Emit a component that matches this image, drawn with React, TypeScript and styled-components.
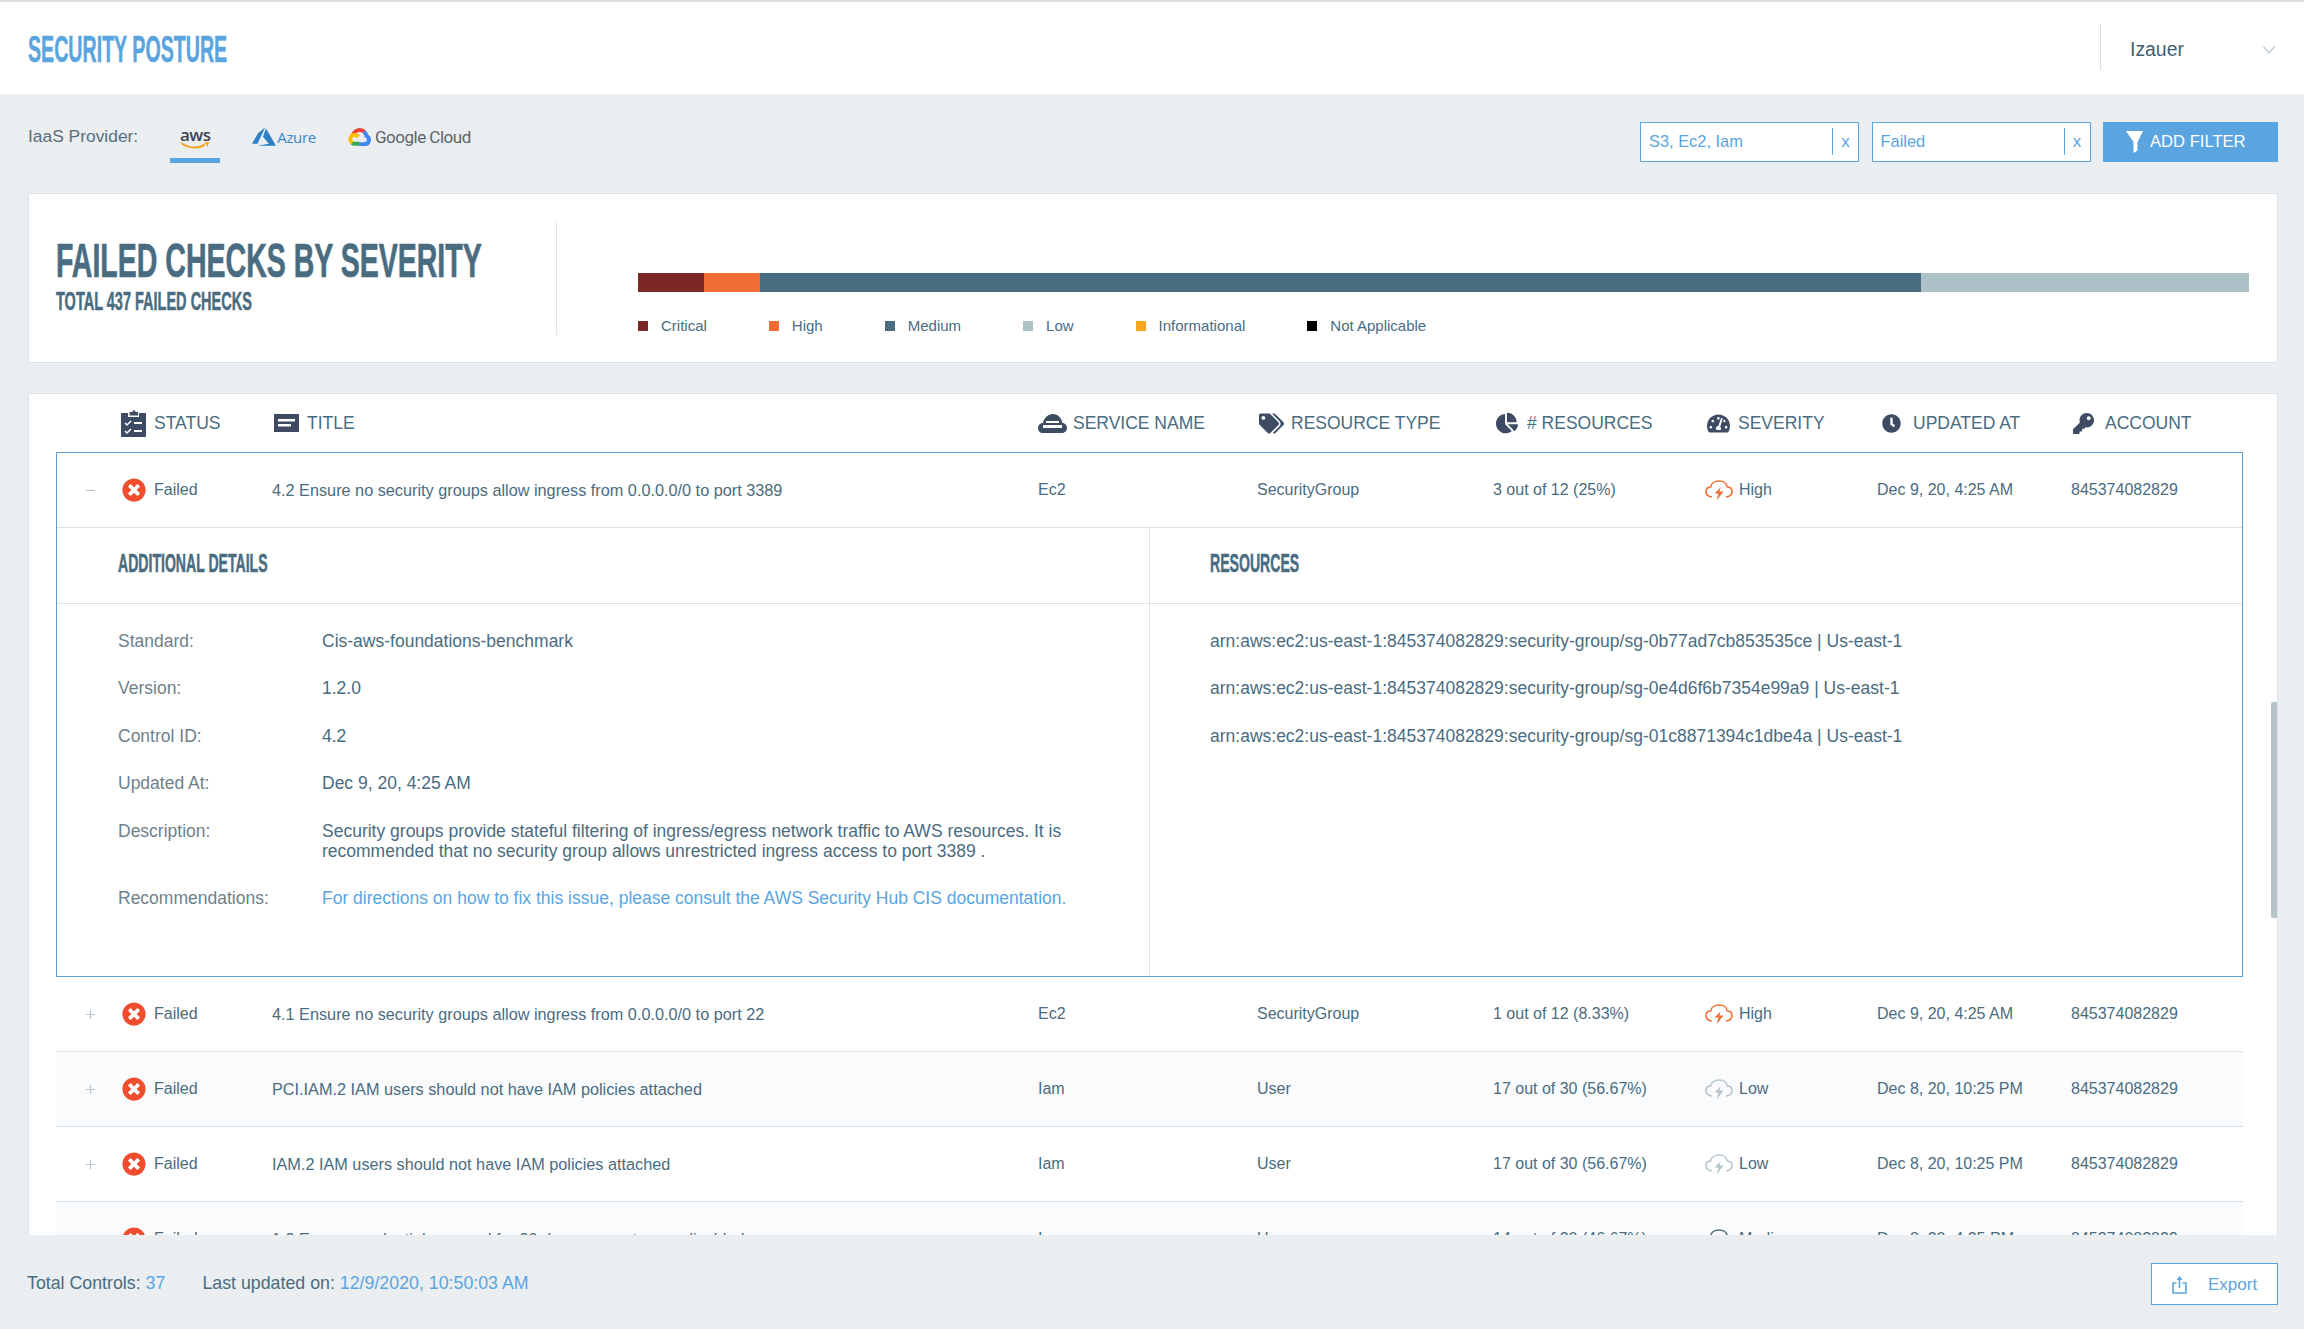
import { FunctionComponent } from "react";
import styled, { createGlobalStyle } from "styled-components";
import { FaChartPie, FaClock, FaKey, FaTachometerAlt, FaTags, FaTimesCircle } from "react-icons/fa";

const GlobalStyle = createGlobalStyle`
  html, body {
    margin: 0;
    padding: 0;
    background: #ebeef1;
  }
  #root {
    height: 1329px;
    overflow: hidden;
    font-family: "Liberation Sans", Arial, sans-serif;
    color: #4a6c80;
  }
  * {
    box-sizing: border-box;
  }
`;

const columns = "63px 151px 766px 219px 236px 212px 172px 194px 1fr";

const severityColors: Record<string, string> = {
  High: "#f26d36",
  Medium: "#4a6c80",
  Low: "#b5c5cd",
};

const segments = [
  { name: "Critical", color: "#7b2826", size: 66 },
  { name: "High", color: "#f26d36", size: 56 },
  { name: "Medium", color: "#4a6c80", size: 1161 },
  { name: "Low", color: "#afc1c8", size: 328 },
  { name: "Informational", color: "#f5a623", size: 0 },
  { name: "Not Applicable", color: "#000000", size: 0 },
];

const details = [
  { label: "Standard:", value: "Cis-aws-foundations-benchmark" },
  { label: "Version:", value: "1.2.0" },
  { label: "Control ID:", value: "4.2" },
  { label: "Updated At:", value: "Dec 9, 20, 4:25 AM" },
  {
    label: "Description:",
    value:
      "Security groups provide stateful filtering of ingress/egress network traffic to AWS resources. It is recommended that no security group allows unrestricted ingress access to port 3389 .",
  },
];

const resources = [
  "arn:aws:ec2:us-east-1:845374082829:security-group/sg-0b77ad7cb853535ce | Us-east-1",
  "arn:aws:ec2:us-east-1:845374082829:security-group/sg-0e4d6f6b7354e99a9 | Us-east-1",
  "arn:aws:ec2:us-east-1:845374082829:security-group/sg-01c8871394c1dbe4a | Us-east-1",
];

const expandedCheck = {
  title: "4.2 Ensure no security groups allow ingress from 0.0.0.0/0 to port 3389",
  service: "Ec2",
  type: "SecurityGroup",
  count: "3 out of 12 (25%)",
  severity: "High",
  updated: "Dec 9, 20, 4:25 AM",
};

const checks = [
  {
    title: "4.1 Ensure no security groups allow ingress from 0.0.0.0/0 to port 22",
    service: "Ec2",
    type: "SecurityGroup",
    count: "1 out of 12 (8.33%)",
    severity: "High",
    updated: "Dec 9, 20, 4:25 AM",
  },
  {
    title: "PCI.IAM.2 IAM users should not have IAM policies attached",
    service: "Iam",
    type: "User",
    count: "17 out of 30 (56.67%)",
    severity: "Low",
    updated: "Dec 8, 20, 10:25 PM",
  },
  {
    title: "IAM.2 IAM users should not have IAM policies attached",
    service: "Iam",
    type: "User",
    count: "17 out of 30 (56.67%)",
    severity: "Low",
    updated: "Dec 8, 20, 10:25 PM",
  },
  {
    title: "1.3 Ensure credentials unused for 90 days or greater are disabled",
    service: "Iam",
    type: "User",
    count: "14 out of 30 (46.67%)",
    severity: "Medium",
    updated: "Dec 8, 20, 4:25 PM",
  },
];

const StatusIcon = () => (
  <svg width="25" height="28" viewBox="0 0 25 28">
    <path d="M0 4h7v4h11V4h7v24H0z" fill="#3d4b63" />
    <path d="M8.500 3h3a1.600 1.600 0 0 1 2.500-1.500L14.500 3h2.500v3.500H8.500z" fill="#3d4b63" />
    <path d="M4 14l2 2 4-4M4 22l2 2 4-4" fill="none" stroke="#fff" strokeWidth="1.500" />
    <path d="M13 14h8M13 22h8" fill="none" stroke="#fff" strokeWidth="1.800" />
  </svg>
);

const TitleIcon = () => (
  <svg width="25" height="18" viewBox="0 0 25 18">
    <rect width="25" height="18" fill="#3d4b63" />
    <rect x="4" y="5" width="17" height="2.500" fill="#fff" />
    <rect x="4" y="10" width="13" height="2.500" fill="#fff" />
  </svg>
);

const ServiceIcon = () => (
  <svg width="29" height="19" viewBox="0 0 29 19">
    <path
      d="M0 14c0-3 2.500-5 5-5 1-5 5-9 10-9s8.500 4 9.500 9c2.500 0 4.500 2.500 4.500 5s-2 5-5 5H5c-3 0-5-2-5-5z"
      fill="#3d4b63"
    />
    <rect x="8" y="7" width="13" height="2" fill="#fff" />
    <rect x="5" y="11" width="19" height="3" fill="#fff" />
  </svg>
);

const CloudBolt: FunctionComponent<{ color: string }> = ({ color }) => (
  <svg width="28" height="21" viewBox="0 0 28 21">
    <path
      d="M7 17C3 16.500 1 14.200 1 11.500 1 8.800 3 7 5.700 7 6.200 3.500 9.600 1 14 1s7.800 2.500 8.300 6C25 7 27 8.800 27 11.500c0 2.700-2 5-6 5.500"
      fill="none"
      stroke={color}
      strokeWidth="1.600"
    />
    <path d="M15.500 7.500L9.500 13.500h4L11.500 20.500l7-9h-4z" fill={color} />
  </svg>
);

const FunnelIcon = () => (
  <svg width="17" height="22" viewBox="0 0 17 22">
    <path d="M0 0h17l-5.500 11v8.500L7.500 22V11z" fill="#fff" />
  </svg>
);

const ExportIcon = () => (
  <svg width="15" height="18" viewBox="0 0 15 18">
    <path d="M4.500 7H1v10h13V7h-3.500" fill="none" stroke="#5aa5df" strokeWidth="1.600" />
    <path d="M7.500 12V2" fill="none" stroke="#5aa5df" strokeWidth="1.600" />
    <path d="M4.500 4L7.500 0l3 4z" fill="#5aa5df" />
  </svg>
);

const Chevron = () => (
  <svg width="12" height="8" viewBox="0 0 12 8">
    <path d="M.5.500L6 7l5.500-6.500" fill="none" stroke="#bccbd2" strokeWidth="1.300" />
  </svg>
);

const AwsSmile = () => (
  <svg width="29" height="8" viewBox="0 0 29 8">
    <path d="M0 1c7 5.500 17 6 24 1.500" fill="none" stroke="#f90" strokeWidth="1.700" />
    <path d="M22.500 .6L28 .3l-1.500 5L25.500 2.300z" fill="#f90" />
  </svg>
);

const AzureIcon = () => (
  <svg width="24" height="19" viewBox="0 2.700 24 18.600">
    <path
      d="M5.483 21.3H24L14.025 4.013l-3.038 8.347 5.836 6.938L5.483 21.3zM13.23 2.7L6.105 8.677 0 19.253h5.505v.014L13.23 2.7z"
      fill="#2b7fc3"
    />
  </svg>
);

const GoogleCloudIcon = () => (
  <svg width="23" height="19" viewBox="0.300 1 23.500 20">
    <path
      d="M15.390 7.360h.72l2.060-2.060.1-.87A9.260 9.260 0 0 0 3.200 8.950c.23-.09.48-.11.72-.05l4.100-.67s.21-.35.32-.33a5.140 5.140 0 0 1 7.050-.54z"
      fill="#ea4335"
    />
    <path
      d="M21.090 8.940a9.280 9.280 0 0 0-2.800-4.500l-2.890 2.880a5.130 5.130 0 0 1 1.880 4.070v.51a2.570 2.570 0 1 1 0 5.140h-5.140l-.51.52v3.080l.51.51h5.140a6.680 6.680 0 0 0 3.810-12.210z"
      fill="#4285f4"
    />
    <path
      d="M6.990 20.650h5.140v-4.110H6.990a2.550 2.550 0 0 1-1.060-.23l-.72.22-2.070 2.060-.18.72a6.650 6.650 0 0 0 4.030 1.340z"
      fill="#34a853"
    />
    <path
      d="M6.990 7.310a6.680 6.680 0 0 0-4.030 11.980l2.980-2.980a2.570 2.570 0 1 1 3.400-3.400l2.980-2.980a6.670 6.670 0 0 0-5.330-2.620z"
      fill="#fbbc05"
    />
  </svg>
);

const Page = styled.div`
  display: flex;
  flex-direction: column;
  height: 1329px;
  background: #ebeef1;
`;

const Header = styled.header`
  display: flex;
  align-items: center;
  justify-content: space-between;
  height: 94px;
  flex: none;
  background: #fff;
  border-top: 2px solid #d9dde2;
  padding-left: 28px;
`;

const Condensed = styled.div`
  display: block;
  font-weight: 700;
  white-space: nowrap;
  transform-origin: left center;
  -webkit-text-stroke: 0.5px currentColor;
`;

const PageTitle = styled(Condensed)`
  color: #5aa5df;
  font-size: 36px;
  line-height: 40px;
  margin-top: 3px;
  transform: scaleX(0.545);
`;

const UserMenu = styled.div`
  display: flex;
  align-items: center;
  justify-content: space-between;
  width: 204px;
  height: 46px;
  margin-top: -2px;
  padding: 5px 29px 0 29px;
  border-left: 1px solid #d8e0e4;
  font-size: 19.4px;
  color: #3f5f73;
`;

const Toolbar = styled.div`
  display: flex;
  justify-content: space-between;
  flex: none;
  height: 99px;
  padding: 28px 26px 0 28px;
`;

const ProviderGroup = styled.div`
  display: flex;
  gap: 32px;
`;

const ProviderLabel = styled.div`
  font-size: 17.4px;
  line-height: 28px;
  color: #566f80;
`;

const ProviderTab = styled.div<{ $active?: boolean }>`
  display: flex;
  flex-direction: ${(p) => (p.$active ? "column" : "row")};
  align-items: center;
  gap: ${(p) => (p.$active ? "0" : "1px")};
  width: ${(p) => (p.$active ? "50px" : "auto")};
  height: 41px;
  padding: ${(p) => (p.$active ? "6px 0 0" : "5px 0 12px")};
  align-self: flex-start;
  border-bottom: 5px solid ${(p) => (p.$active ? "#5aa5df" : "transparent")};
`;

const AwsWord = styled.span`
  font-family: "Open Sans", sans-serif;
  font-size: 17px;
  font-weight: 600;
  line-height: 14px;
  letter-spacing: -0.5px;
  color: #3c4650;
`;

const AzureWord = styled.span`
  font-family: "Open Sans", sans-serif;
  font-size: 15px;
  line-height: 22px;
  letter-spacing: -0.3px;
  color: #3b89c9;
`;

const GoogleWord = styled.span`
  margin-left: 3px;
  font-family: Roboto, sans-serif;
  font-size: 17px;
  line-height: 22px;
  letter-spacing: -0.5px;
  color: #5f6368;
`;

const FilterGroup = styled.div`
  display: flex;
  gap: 12.5px;
`;

const FilterBox = styled.div`
  display: flex;
  align-items: center;
  justify-content: space-between;
  width: 219px;
  height: 40px;
  padding: 0 0 1px 8px;
  background: #fff;
  border: 1px solid #5aa5df;
  font-size: 16.4px;
  color: #5aa5df;
`;

const FilterClear = styled.span`
  display: flex;
  align-items: center;
  justify-content: center;
  width: 26px;
  height: 27px;
  border-left: 1px solid #5aa5df;
  font-size: 17px;
`;

const AddFilterButton = styled.button`
  display: flex;
  align-items: center;
  gap: 7px;
  width: 175px;
  height: 40px;
  padding: 0 0 0 23px;
  border: 0;
  background: #5aa5df;
  color: #fff;
  font-family: inherit;
  font-size: 16.6px;
`;

const ChartCard = styled.section`
  display: flex;
  flex: none;
  align-items: center;
  height: 170px;
  margin: 0 26px 0 28px;
  background: #fff;
  border: 1px solid #dde2e6;
`;

const ChartHeading = styled.div`
  display: flex;
  flex-direction: column;
  justify-content: center;
  width: 528px;
  height: 113px;
  padding: 0 0 6px 27px;
  border-right: 1px solid #dde2e6;
`;

const ChartTitle = styled(Condensed)`
  color: #4a6c80;
  font-size: 49px;
  line-height: 50px;
  transform: scaleX(0.582);
  -webkit-text-stroke: 0.7px currentColor;
`;

const ChartSubtitle = styled(Condensed)`
  color: #4a6c80;
  font-size: 26px;
  line-height: 28px;
  margin-top: 2px;
  transform: scaleX(0.558);
`;

const ChartBody = styled.div`
  display: flex;
  flex: 1;
  flex-direction: column;
  align-self: flex-start;
  margin: 79px 28px 0 81px;
`;

const StackedBar = styled.div`
  display: flex;
  height: 19px;
`;

const Segment = styled.div<{ $color: string }>`
  background: ${(p) => p.$color};
`;

const Legend = styled.div`
  display: flex;
  gap: 62px;
  margin-top: 24px;
`;

const LegendItem = styled.div<{ $color: string }>`
  display: flex;
  align-items: center;
  gap: 13px;
  font-size: 15px;
  line-height: 20px;

  &::before {
    content: "";
    width: 10px;
    height: 10px;
    background: ${(p) => p.$color};
  }
`;

const TableCard = styled.section`
  position: relative;
  flex: none;
  height: 842px;
  margin: 30px 26px 0 28px;
  padding: 0 34px 0 27px;
  overflow: hidden;
  background: #fff;
  border: 1px solid #dde2e6;
  border-bottom: 0;
`;

const ScrollThumb = styled.div`
  position: absolute;
  top: 308px;
  right: -1px;
  width: 7px;
  height: 216px;
  border-radius: 2px 0 0 2px;
  background: #b6c4ca;
`;

const TableHead = styled.div`
  display: grid;
  grid-template-columns: ${columns};
  align-items: center;
  height: 58px;
  padding: 0 1px;
  font-size: 17.5px;
`;

const HeadCell = styled.div<{ $start: number; $pad: number; $gap: number }>`
  display: flex;
  align-items: center;
  grid-column: ${(p) => p.$start};
  gap: ${(p) => p.$gap}px;
  padding-left: ${(p) => p.$pad}px;
  white-space: nowrap;
  color: #4a6c80;

  svg {
    flex: none;
    color: #3d4b63;
  }
`;

const Row = styled.div<{ $striped?: boolean; $flush?: boolean }>`
  display: grid;
  grid-template-columns: ${columns};
  align-items: center;
  height: 75px;
  padding: 0 ${(p) => (p.$flush ? "0" : "1px")};
  font-size: 16px;
  background: ${(p) => (p.$striped ? "#f9fbfc" : "#fff")};
  border-bottom: 1px solid #d9e2e7;
`;

const ExpandCell = styled.div`
  padding-left: 29px;
  font-size: 0;
`;

const ExpandSign = styled.svg`
  display: block;
`;

const StatusCell = styled.div`
  display: flex;
  align-items: center;
  gap: 8px;
  padding-left: 2px;

  svg {
    color: #ef4d2d;
    background: radial-gradient(circle, #fff 55%, transparent 56%);
    border-radius: 50%;
  }
`;

const SeverityCell = styled.div`
  display: flex;
  align-items: center;
  gap: 6px;
  padding-left: 1px;
`;

const TextCell = styled.div`
  padding-left: 1px;
  white-space: nowrap;
`;

const TitleCell = styled(TextCell)`
  font-size: 16.26px;
`;

const ExpandedBox = styled.div`
  border: 1px solid #5f9fd2;
`;

const DetailPanels = styled.div`
  display: grid;
  grid-template-columns: 1092px 1fr;
`;

const DetailPanel = styled.div`
  & + & {
    border-left: 1px solid #d9e2e7;
  }
`;

const PanelHead = styled.div`
  display: flex;
  align-items: center;
  height: 76px;
  padding: 0 0 6px 61px;
  border-bottom: 1px solid #d9e2e7;
`;

const PanelHeadAlt = styled(PanelHead)`
  padding-left: 60px;
`;

const PanelTitle = styled(Condensed)`
  color: #4a6c80;
  font-size: 25px;
  line-height: 28px;
  transform: scaleX(0.563);
`;

const PanelBody = styled.div`
  display: flex;
  flex-direction: column;
  gap: 27.4px;
  min-height: 372px;
  padding: 27px 0 0 61px;
  font-size: 17.5px;
  line-height: 20px;
`;

const PanelBodyAlt = styled(PanelBody)`
  padding-left: 60px;
`;

const DetailRow = styled.div`
  display: grid;
  grid-template-columns: 204px 780px;
`;

const DetailLabel = styled.div`
  color: #6f7f8a;
`;

const DetailLink = styled.a`
  color: #5aa5df;
  text-decoration: none;
`;

const Footer = styled.footer`
  display: flex;
  align-items: center;
  justify-content: space-between;
  flex: 1;
  padding: 3px 26px 0 27px;
  font-size: 17.8px;
  color: #4a6c80;
`;

const FooterInfo = styled.div`
  display: flex;
  gap: 37px;
`;

const FooterValue = styled.span`
  color: #5aa5df;
`;

const ExportButton = styled.button`
  display: flex;
  align-items: center;
  gap: 21px;
  width: 127px;
  height: 42px;
  padding: 2px 0 0 20px;
  background: #fff;
  border: 1px solid #5aa5df;
  color: #5aa5df;
  font-family: inherit;
  font-size: 17px;
`;

const heads = [
  { label: "STATUS", pad: 1, gap: 8, icon: <StatusIcon /> },
  { label: "TITLE", pad: 3, gap: 8, icon: <TitleIcon /> },
  { label: "SERVICE NAME", pad: 1, gap: 6, icon: <ServiceIcon /> },
  { label: "RESOURCE TYPE", pad: 3, gap: 7, icon: <FaTags size={25} /> },
  { label: "# RESOURCES", pad: 4, gap: 9, icon: <FaChartPie size={22} /> },
  { label: "SEVERITY", pad: 3, gap: 8, icon: <FaTachometerAlt size={23} /> },
  { label: "UPDATED AT", pad: 6, gap: 12, icon: <FaClock size={19} /> },
  { label: "ACCOUNT", pad: 3, gap: 11, icon: <FaKey size={21} /> },
];

type Check = typeof expandedCheck;

const CheckCells: FunctionComponent<{ check: Check; open?: boolean }> = ({ check, open }) => (
  <>
    <ExpandCell>
      <ExpandSign width="9" height="9" viewBox="0 0 9 9">
        <path d={open ? "M0 4.500h9" : "M0 4.500h9M4.500 0v9"} stroke="#b8c7cf" strokeWidth="1.200" />
      </ExpandSign>
    </ExpandCell>
    <StatusCell>
      <FaTimesCircle size={24} />
      Failed
    </StatusCell>
    <TitleCell>{check.title}</TitleCell>
    <TextCell>{check.service}</TextCell>
    <TextCell>{check.type}</TextCell>
    <TextCell>{check.count}</TextCell>
    <SeverityCell>
      <CloudBolt color={severityColors[check.severity]} />
      {check.severity}
    </SeverityCell>
    <TextCell>{check.updated}</TextCell>
    <TextCell>845374082829</TextCell>
  </>
);

const App = () => (
  <Page>
    <GlobalStyle />
    <Header>
      <PageTitle>SECURITY POSTURE</PageTitle>
      <UserMenu>
        Izauer
        <Chevron />
      </UserMenu>
    </Header>
    <Toolbar>
      <ProviderGroup>
        <ProviderLabel>IaaS Provider:</ProviderLabel>
        <ProviderTab $active>
          <AwsWord>aws</AwsWord>
          <AwsSmile />
        </ProviderTab>
        <ProviderTab>
          <AzureIcon />
          <AzureWord>Azure</AzureWord>
        </ProviderTab>
        <ProviderTab>
          <GoogleCloudIcon />
          <GoogleWord>Google Cloud</GoogleWord>
        </ProviderTab>
      </ProviderGroup>
      <FilterGroup>
        <FilterBox>
          S3, Ec2, Iam
          <FilterClear>x</FilterClear>
        </FilterBox>
        <FilterBox>
          Failed
          <FilterClear>x</FilterClear>
        </FilterBox>
        <AddFilterButton>
          <FunnelIcon />
          ADD FILTER
        </AddFilterButton>
      </FilterGroup>
    </Toolbar>
    <ChartCard>
      <ChartHeading>
        <ChartTitle>FAILED CHECKS BY SEVERITY</ChartTitle>
        <ChartSubtitle>TOTAL 437 FAILED CHECKS</ChartSubtitle>
      </ChartHeading>
      <ChartBody>
        <StackedBar>
          {segments
            .filter((segment) => segment.size > 0)
            .map((segment) => (
              <Segment key={segment.name} $color={segment.color} style={{ flexGrow: segment.size }} />
            ))}
        </StackedBar>
        <Legend>
          {segments.map((segment) => (
            <LegendItem key={segment.name} $color={segment.color}>
              {segment.name}
            </LegendItem>
          ))}
        </Legend>
      </ChartBody>
    </ChartCard>
    <TableCard>
      <TableHead>
        {heads.map((head, index) => (
          <HeadCell key={head.label} $start={index + 2} $pad={head.pad} $gap={head.gap}>
            {head.icon}
            {head.label}
          </HeadCell>
        ))}
      </TableHead>
      <ExpandedBox>
        <Row $flush>
          <CheckCells check={expandedCheck} open />
        </Row>
        <DetailPanels>
          <DetailPanel>
            <PanelHead>
              <PanelTitle>ADDITIONAL DETAILS</PanelTitle>
            </PanelHead>
            <PanelBody>
              {details.map((detail) => (
                <DetailRow key={detail.label}>
                  <DetailLabel>{detail.label}</DetailLabel>
                  <div>{detail.value}</div>
                </DetailRow>
              ))}
              <DetailRow>
                <DetailLabel>Recommendations:</DetailLabel>
                <DetailLink>For directions on how to fix this issue, please consult the AWS Security Hub CIS documentation.</DetailLink>
              </DetailRow>
            </PanelBody>
          </DetailPanel>
          <DetailPanel>
            <PanelHeadAlt>
              <PanelTitle>RESOURCES</PanelTitle>
            </PanelHeadAlt>
            <PanelBodyAlt>
              {resources.map((resource) => (
                <div key={resource}>{resource}</div>
              ))}
            </PanelBodyAlt>
          </DetailPanel>
        </DetailPanels>
      </ExpandedBox>
      {checks.map((check, index) => (
        <Row key={check.title} $striped={index % 2 === 1}>
          <CheckCells check={check} />
        </Row>
      ))}
      <ScrollThumb />
    </TableCard>
    <Footer>
      <FooterInfo>
        <span>
          Total Controls: <FooterValue>37</FooterValue>
        </span>
        <span>
          Last updated on: <FooterValue>12/9/2020, 10:50:03 AM</FooterValue>
        </span>
      </FooterInfo>
      <ExportButton>
        <ExportIcon />
        Export
      </ExportButton>
    </Footer>
  </Page>
);

export default App;
